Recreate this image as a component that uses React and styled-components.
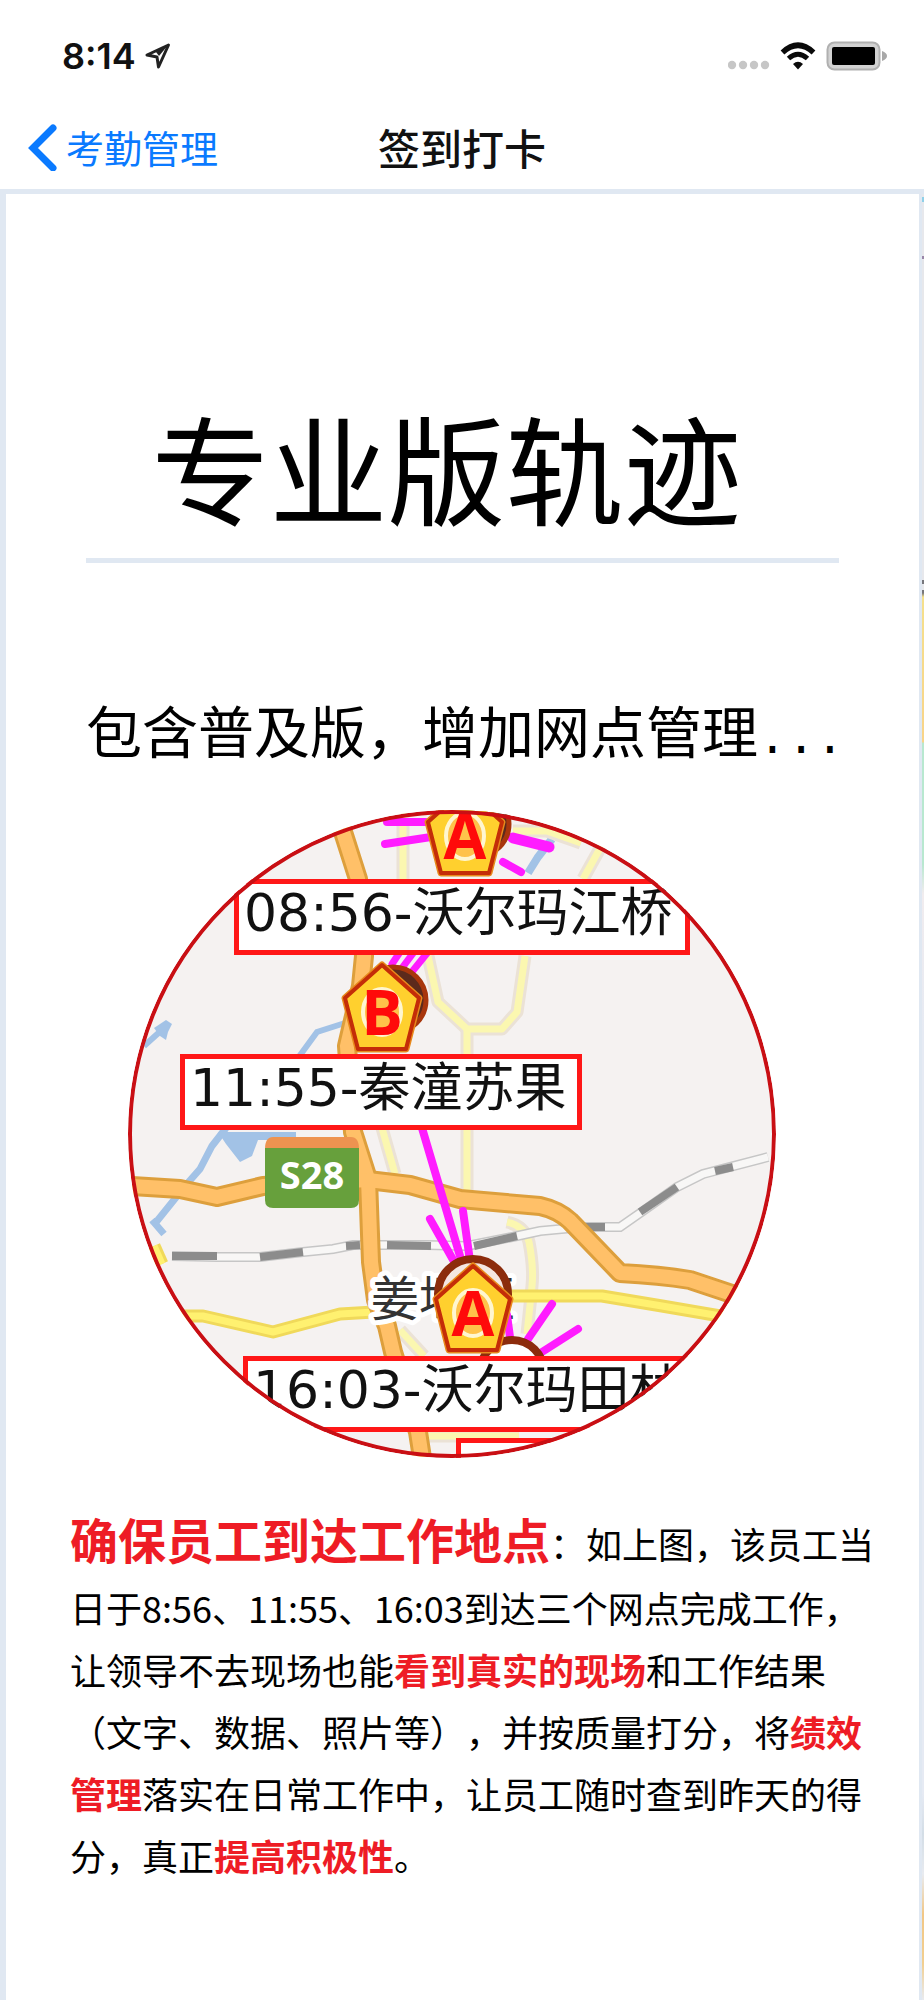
import React from 'react';
import styled, { createGlobalStyle, ThemeProvider } from 'styled-components';

const theme = {
  line: '#e0e8f2',
  link: '#0a7aff',
  accent: '#ee1c25',
  label: '#ff1717',
  ring: '#c90f14',
  land: '#f5f2f1',
  cjk: "'Noto Sans CJK SC', sans-serif",
};

const GlobalStyle = createGlobalStyle`
  * { box-sizing: border-box; }

  body {
    margin: 0;
    background: #fff;
    color: #000;
    font-family: ${theme.cjk};
    text-spacing-trim: space-all;
  }
`;

const StyledPage = styled.div`
  display: flex;
  flex-direction: column;
  min-height: 100vh;
`;

const StyledStatusBar = styled.div`
  display: flex;
  align-items: center;
  justify-content: space-between;
  height: 112px;
  padding: 0 36px 0 62px;
`;

const StyledStatusGroup = styled.div`
  display: flex;
  align-items: center;
  gap: ${({ $gap }) => $gap}px;
`;

const StyledTime = styled.time`
  font-family: Inter, sans-serif;
  font-size: 36px;
  font-weight: 600;
  line-height: 40px;
  color: #111;
`;

const StyledNav = styled.nav`
  display: grid;
  grid-template-columns: 1fr auto 1fr;
  align-items: center;
  height: 77px;
  padding: 0 28px 8px;
`;

const StyledBack = styled.a`
  display: flex;
  align-items: center;
  gap: 8px;
  font-size: 38px;
  line-height: 48px;
  color: ${({ theme }) => theme.link};
  text-decoration: none;
`;

const StyledNavTitle = styled.h1`
  margin: 0;
  font-size: 42px;
  font-weight: 500;
  line-height: 48px;
  color: #111;
`;

const StyledBody = styled.div`
  flex: 1;
  display: grid;
  grid-template-columns: 1fr 2px;
`;

const StyledFrame = styled.main`
  border: solid ${({ theme }) => theme.line};
  border-width: 5px 3px 0 6px;
`;

/* sliver of the map that shows beside the frame */
const StyledMapEdge = styled.div`
  border-top: 5px solid ${({ theme }) => theme.line};
  background: linear-gradient(
    #e7e8ec 3px,
    #8fd0e8 3px 8px,
    #e7e8ec 8px 62px,
    #9a86a8 62px 65px,
    #e7e8ec 65px 386px,
    #77777c 386px 390px,
    #e7e8ec 390px 396px,
    #77777c 396px 399px,
    #f5e08c 403px,
    #f9d488 548px,
    #b8e8d0 549px 670px,
    #f1ecee 700px,
    #e6eaf3 840px 1600px,
    #d3dde6 1640px,
    #e8ebf0 1680px,
    #f2c785 1720px,
    #f2cf90 1770px,
    #e8ebf0
  );
`;

const StyledHeader = styled.header`
  margin: 0 80px;
  padding: 184px 32px 4px 0;
  border-bottom: 5px solid ${({ theme }) => theme.line};
`;

const StyledTitle = styled.h2`
  margin: 0;
  font-size: 118px;
  font-weight: 400;
  line-height: 176px;
  text-align: center;
`;

const StyledSubtitle = styled.p`
  margin: 134px 0 0 80px;
  font-size: 56px;
  line-height: 64px;
  white-space: nowrap;
`;

const StyledDots = styled.span`
  font-family: 'Liberation Mono', monospace;
  font-size: 48px;
`;

const StyledMap = styled.figure`
  position: relative;
  width: 648px;
  height: 648px;
  margin: 38px auto 0 122px;
  border-radius: 50%;
  overflow: hidden;
  background: ${({ theme }) => theme.land};

  &::after {
    content: '';
    position: absolute;
    inset: 0;
    border: 4px solid ${({ theme }) => theme.ring};
    border-radius: 50%;
  }
`;

const StyledMapDrawing = styled.svg`
  display: block;
  width: 100%;
  height: 100%;
`;

const StyledStop = styled.div`
  position: absolute;
  left: ${({ $x }) => $x}px;
  top: ${({ $y }) => $y}px;
  width: ${({ $w }) => $w}px;
  height: 76px;
  padding-left: 5px;
  border: 5px solid ${({ theme }) => theme.label};
  background: #fff;
  color: #111;
  font-family: 'DejaVu Sans', 'Noto Sans CJK SC', sans-serif;
  font-size: 52px;
  line-height: 58px;
  white-space: nowrap;
`;

const StyledText = styled.p`
  margin: 42px 40px 0 64px;
  font-size: 36px;
  line-height: 62px;
`;

const StyledStrong = styled.strong`
  font-weight: 700;
  color: ${({ theme }) => theme.accent};
`;

const StyledLead = styled(StyledStrong)`
  font-size: 48px;
  line-height: 76px;
`;

const StyledPinLetter = styled.text`
  fill: #ff0a0a;
  font-family: 'Open Sans', sans-serif;
  font-size: 62px;
  font-weight: 700;
`;

const StyledPlaceName = styled.text`
  fill: #333;
  stroke: #fff;
  stroke-width: 10px;
  stroke-linejoin: round;
  paint-order: stroke;
  font-family: ${({ theme }) => theme.cjk};
  font-size: 48px;
`;

const StyledRoadNumber = styled.text`
  fill: #fff;
  font-family: 'Open Sans', sans-serif;
  font-size: 38px;
  font-weight: 700;
`;

const stops = [
  { x: 106, y: 69, w: 456, name: '08:56-沃尔玛江桥' },
  { x: 52, y: 244, w: 402, name: '11:55-秦潼苏果' },
  { x: 115, y: 546, w: 520, name: '16:03-沃尔玛田林' },
  { x: 328, y: 628, w: 300, name: '' },
];

const roads = {
  pale: [
    'M275 0V69',
    'M300 146l10 46 29 27h35l15-17 8-56',
    'M339 219V382',
    'M480 24L455 69',
    'M385 21h34l34 12',
    'M254 318l13 46',
    'M379 412q18 4 22 20 5 26 3 44l-5 48',
    'M272 520l24 26',
    'M295 626h96',
  ],
  yellow: ['M26 436l8 18', 'M40 506h35l70 16 67-18 34-2', 'M380 486h94l60 10 70 12'],
  orange: [
    'M208 0l22 69 6 77-3 30-14 60 6 86 15 47 3 83 5 38 11 26 6 26 25 80 4 26',
    'M4 376l48 3 37 8 46-11 105-6 42 5 50 14 80 7q18 4 30 15l50 52q40 2 70 7l54 18',
  ],
};

const railway = 'M44 446l45 1 43 0 43-5 30-3 20-4h74l40 1 50-10 23-5 43-4h37l23-16 34-24 26-13 65-17';
const railDashes = [
  'M44 446h45', 'M132 447l43-5', 'M218 436l14-1', 'M259 435l44 1', 'M346 436l43-10',
  'M455 417h22', 'M512 402l37-25', 'M587 361l18-4',
];

const track = [
  'M294 318l38 128', 'M302 409l26 46', 'M335 401l7 50', 'M424 494l-24 35', 'M450 519l-36 23',
  'M379 505l3 22', 'M259 12h50', 'M257 34l46-7', 'M375 52l18 10',
];

const pentagon = 'M0-46L37-13 24 38H-24L-37-13z';

const Pin = ({ x, y, letter, tilted }) => (
  <g transform={`translate(${x} ${y})`}>
    {tilted ? (
      <circle cx="11" cy="-11" r="33" fill="#5c2a1c" stroke="#a8360c" strokeWidth="5" />
    ) : (
      <circle cy="-18" r="35" fill="#f4e6e2" stroke="#8c2c0c" strokeWidth="8" />
    )}
    <path d={pentagon} fill="#ffd02e" stroke="#e88a1c" strokeWidth="7" strokeLinejoin="round" />
    <path d={pentagon} fill="#ffd02e" stroke="#c42d08" strokeWidth="4" strokeLinejoin="round" />
    <ellipse cy="1" rx="19" ry="23" fill="#ffc24a" stroke="#fff6d0" strokeWidth="4" />
    <StyledPinLetter y="24" textAnchor="middle">{letter}</StyledPinLetter>
  </g>
);

const Road = ({ paths, color, casing, width }) => (
  <g fill="none" strokeLinejoin="round">
    {paths.map(d => <path key={d} d={d} stroke={casing} strokeWidth={width + 6} />)}
    {paths.map(d => <path key={d} d={d} stroke={color} strokeWidth={width} />)}
  </g>
);

const TrackMap = () => (
  <StyledMap>
    <StyledMapDrawing viewBox="0 0 648 648">
      <g fill="none" stroke="#a2c2e6" strokeWidth="8">
        <path d="M16 236l20-18" strokeWidth="6" />
        <path d="M26 218l12-8 6 4-4 8-2 8-6-4z" fill="#a2c2e6" stroke="none" />
        <path d="M170 248l19-26 28-9" strokeWidth="6" />
        <path d="M98 318l-14 18-12 23-14 16-33 41M24 410l12 14" strokeWidth="7" />
        <path d="M424 29l-14 18-10 16" />
        <path d="M90 322h78v8h-38l-6 16-12 6-14-18z" fill="#a2c2e6" stroke="none" />
      </g>
      <Road paths={roads.pale} color="#fbf7b0" casing="#ebe2d6" width={7} />
      <g fill="none">
        <path d={railway} stroke="#c6c6c6" strokeWidth="10" />
        <path d={railway} stroke="#f8f7f6" strokeWidth="7" />
        {railDashes.map(d => <path key={d} d={d} stroke="#8c8c8c" strokeWidth="8" />)}
      </g>
      <Road paths={roads.yellow} color="#fff170" casing="#f0d95a" width={7} />
      <Road paths={roads.orange} color="#ffc068" casing="#dd9f3c" width={14} />

      <path d="M137 339q0-12 8-12h78q8 0 8 12z" fill="#ee9350" />
      <path d="M137 338h94v52q0 8-8 8h-78q-8 0-8-8z" fill="#67a03c" />
      <StyledRoadNumber x="184" y="379" textAnchor="middle">S28</StyledRoadNumber>
      <StyledPlaceName x="243" y="506">姜堰区</StyledPlaceName>

      <g fill="none" stroke="#ff1cff" strokeWidth="8" strokeLinecap="round">
        {track.map(d => <path key={d} d={d} />)}
        <path d="M385 28l36 9" strokeWidth="11" />
        <path d="M272 142l-8 12M286 142l-12 16M300 142l-17 21" strokeWidth="7" />
      </g>

      <circle cx="384" cy="562" r="32" fill="#fff" stroke="#8c2c0c" strokeWidth="8" />
      <Pin x={337} y={25} letter="A" tilted />
      <Pin x={254} y={201} letter="B" tilted />
      <Pin x={345} y={502} letter="A" />
    </StyledMapDrawing>
    {stops.map(({ x, y, w, name }) => (
      <StyledStop key={`${x}-${y}`} $x={x} $y={y} $w={w}>{name}</StyledStop>
    ))}
  </StyledMap>
);

const StatusBar = () => (
  <StyledStatusBar>
    <StyledStatusGroup $gap={8}>
      <StyledTime>8:14</StyledTime>
      <svg width="28" height="28" viewBox="0 0 28 28" aria-hidden="true">
        <path d="M24.500 3L3 13l10 2 1.500 10z" fill="none" stroke="#222" strokeWidth="3" strokeLinejoin="round" />
        <path d="M25 2L12 10l3 4z" fill="#222" />
      </svg>
    </StyledStatusGroup>
    <StyledStatusGroup $gap={10}>
      <svg width="42" height="28" viewBox="0 0 42 28" fill="#c6c6c6" aria-hidden="true">
        {[4, 15, 26, 37].map(cx => <circle key={cx} cx={cx} cy="23" r="4.200" />)}
      </svg>
      <svg width="36" height="28" viewBox="0 0 36 28" fill="none" stroke="#0a0a0a" aria-hidden="true">
        <path d="M2.500 10.500Q18-4 33.500 10.500" strokeWidth="5.500" />
        <path d="M8.500 16.500Q18 8 27.500 16.500" strokeWidth="5" />
        <path d="M13 22q5-4.500 10 0l-5 5.500z" fill="#0a0a0a" stroke="none" />
      </svg>
      <svg width="62" height="30" viewBox="0 0 62 30" aria-hidden="true">
        <rect x="1.500" y="1.500" width="52" height="27" rx="7" fill="#d2d2d2" stroke="#b0b0b0" strokeWidth="2" />
        <rect x="6" y="6" width="43" height="18" rx="2" />
        <path d="M56 10q5 2 5 5t-5 5z" fill="#a8a8a8" />
      </svg>
    </StyledStatusGroup>
  </StyledStatusBar>
);

const App = () => (
  <ThemeProvider theme={theme}>
    <GlobalStyle />
    <StyledPage>
      <StatusBar />
      <StyledNav>
        <StyledBack href="#attendance">
          <svg width="30" height="48" viewBox="0 0 30 48" aria-hidden="true">
            <path d="M25 5L5 25l20 20" fill="none" stroke="#0a7aff" strokeWidth="7" strokeLinecap="round" />
          </svg>
          考勤管理
        </StyledBack>
        <StyledNavTitle>签到打卡</StyledNavTitle>
      </StyledNav>
      <StyledBody>
        <StyledFrame>
          <StyledHeader>
            <StyledTitle>专业版轨迹</StyledTitle>
          </StyledHeader>
          <StyledSubtitle>包含普及版，增加网点管理<StyledDots>...</StyledDots></StyledSubtitle>
          <TrackMap />
          <StyledText>
            <StyledLead>确保员工到达工作地点</StyledLead>
            ：如上图，该员工当日于8:56、11:55、16:03到达三个网点完成工作，让领导不去现场也能
            <StyledStrong>看到真实的现场</StyledStrong>
            和工作结果（文字、数据、照片等），并按质量打分，将
            <StyledStrong>绩效管理</StyledStrong>
            落实在日常工作中，让员工随时查到昨天的得分，真正
            <StyledStrong>提高积极性</StyledStrong>
            。
          </StyledText>
        </StyledFrame>
        <StyledMapEdge />
      </StyledBody>
    </StyledPage>
  </ThemeProvider>
);

export default App;
